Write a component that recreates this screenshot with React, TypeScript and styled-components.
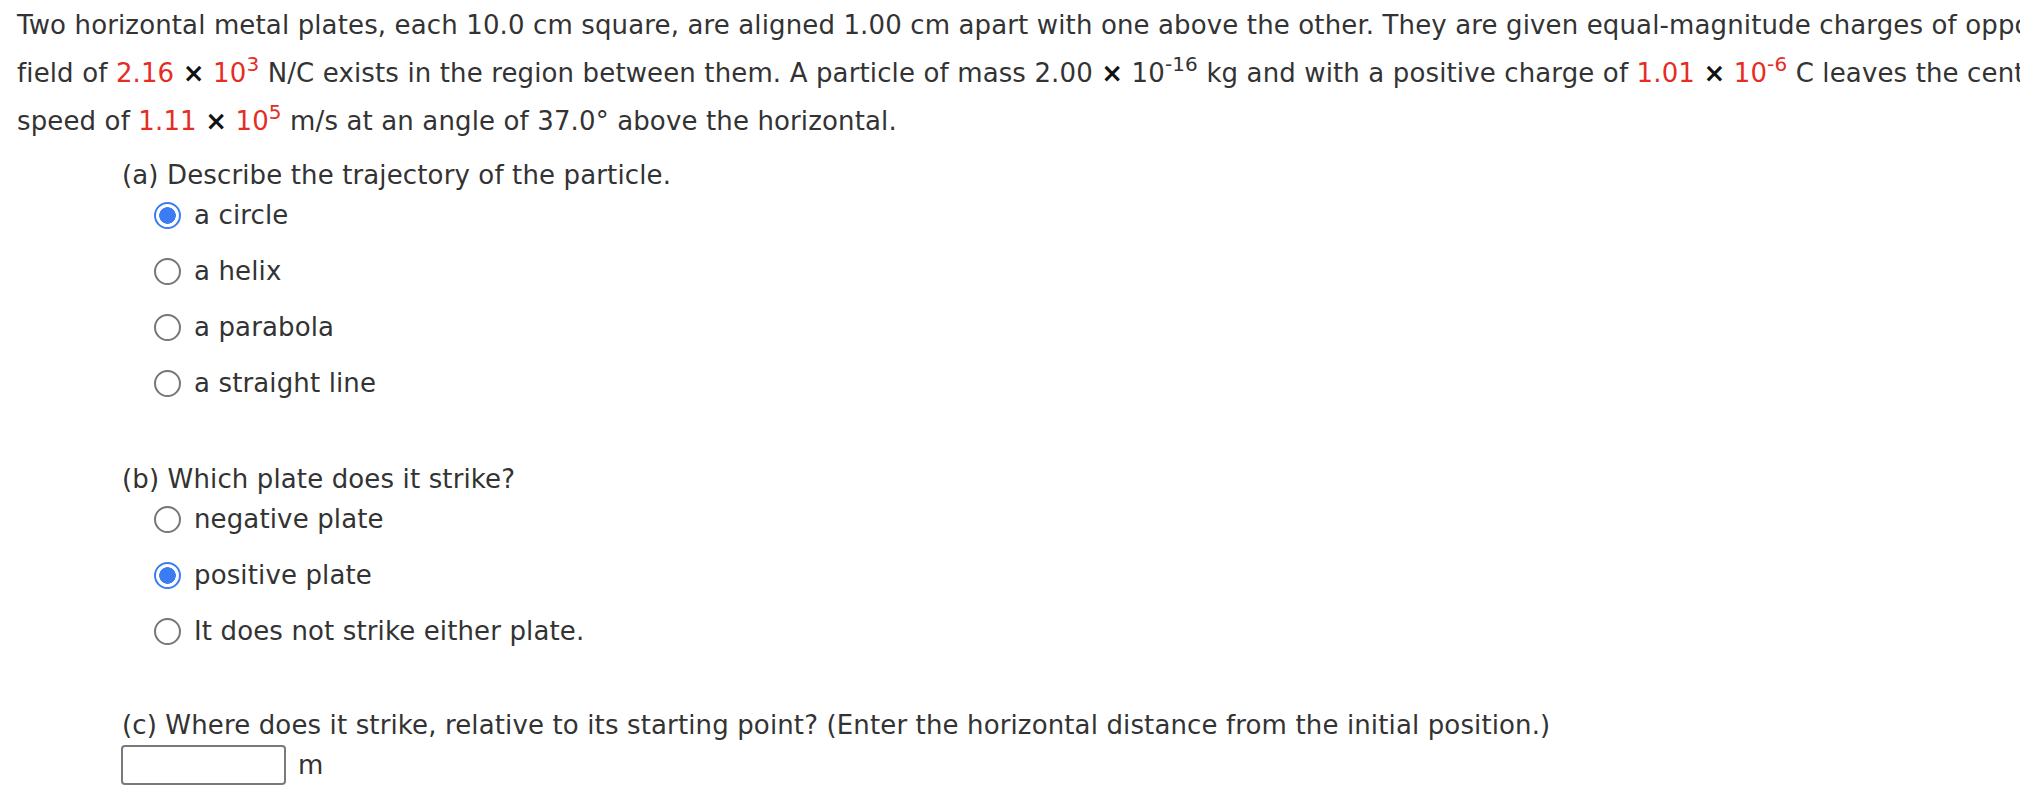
import React from 'react';
import styled, { createGlobalStyle, css } from 'styled-components';

const GlobalStyle = createGlobalStyle`
    html, body {
        margin: 0;
        padding: 0;
        background: #ffffff;
        overflow: hidden;
    }
    body {
        font-family: "DejaVu Sans", Verdana, sans-serif;
        color: #333333;
    }
`;

const Page = styled.div`
    width: 2020px;
    height: 810px;
    padding: 1px 0 0 17px;
    box-sizing: border-box;
    overflow: hidden;
    font-size: 26px;
    letter-spacing: 0.13px;
`;

// the prompt runs past the right edge in the original, so the lines are kept whole and clipped
const Prompt = styled.p`
    margin: 0;
    line-height: 48px;
    white-space: nowrap;
`;

const Value = styled.span`
    color: #e52d24;
`;

const Times = styled.span`
    color: #111111;
    font-weight: bold;
`;

const Sup = styled.sup`
    font-size: 20px;
    line-height: 0;
    vertical-align: baseline;
    position: relative;
    top: -11px;
`;

const Part = styled.div<{ gapTop: number }>`
    margin-top: ${({ gapTop }) => gapTop}px;
    padding-left: 105px;
`;

const PartLabel = styled.div`
    line-height: 40px;
    white-space: nowrap;
`;

const OptionList = styled.div`
    display: flex;
    flex-direction: column;
    gap: 16px;
    padding-left: 32px;
`;

const Option = styled.label`
    display: flex;
    align-items: center;
    height: 40px;
    line-height: 40px;
    white-space: nowrap;
    cursor: pointer;
`;

const Radio = styled.span<{ checked: boolean }>`
    display: inline-block;
    box-sizing: border-box;
    width: 27px;
    height: 27px;
    border-radius: 50%;
    margin-right: 13px;
    border: 2px solid #767676;
    background: #ffffff;
    flex-shrink: 0;

    ${({ checked }) => checked && css`
        border: 2px solid #3b7cf4;
        background: radial-gradient(circle, #3b7cf4 0 8px, #ffffff 8.6px);
    `};
`;

const AnswerRow = styled.div`
    display: flex;
    align-items: center;
    margin-left: -1px;
    height: 40px;
`;

const AnswerInput = styled.input`
    box-sizing: border-box;
    width: 165px;
    height: 40px;
    border: 2px solid #7a7a7a;
    border-radius: 4px;
    background: #ffffff;
    margin: 0 12px 0 0;
    padding: 0 6px;
    font: inherit;
    outline: none;
`;

const Unit = styled.span`
    line-height: 40px;
`;

type Choice = { text: string; checked?: boolean };

const partA: Choice[] = [
    { text: 'a circle', checked: true },
    { text: 'a helix' },
    { text: 'a parabola' },
    { text: 'a straight line' },
];

const partB: Choice[] = [
    { text: 'negative plate' },
    { text: 'positive plate', checked: true },
    { text: 'It does not strike either plate.' },
];

function Choices({ items }: { items: Choice[] }) {
    return (
        <OptionList>
            {items.map((c) => (
                <Option key={c.text}>
                    <Radio checked={!!c.checked} />
                    {c.text}
                </Option>
            ))}
        </OptionList>
    );
}

export default function App() {
    return (
        <>
            <GlobalStyle />
            <Page>
                <Prompt>
                    Two horizontal metal plates, each 10.0 cm square, are aligned 1.00 cm apart with one above the other. They are given equal-magnitude charges of opposite sign so that a uniform downward electric
                    <br />
                    field of <Value>2.16</Value> <Times>×</Times> <Value>10<Sup>3</Sup></Value> N/C exists in the region between them. A particle of mass 2.00 <Times>×</Times> 10<Sup>-16</Sup> kg and with a positive charge of <Value>1.01</Value> <Times>×</Times> <Value>10<Sup>-6</Sup></Value> C leaves the center of the bottom negative plate with an initial
                    <br />
                    speed of <Value>1.11</Value> <Times>×</Times> <Value>10<Sup>5</Sup></Value> m/s at an angle of 37.0° above the horizontal.
                </Prompt>

                <Part gapTop={10}>
                    <PartLabel>(a) Describe the trajectory of the particle.</PartLabel>
                    <Choices items={partA} />
                </Part>

                <Part gapTop={56}>
                    <PartLabel>(b) Which plate does it strike?</PartLabel>
                    <Choices items={partB} />
                </Part>

                <Part gapTop={54}>
                    <PartLabel>(c) Where does it strike, relative to its starting point? (Enter the horizontal distance from the initial position.)</PartLabel>
                    <AnswerRow>
                        <AnswerInput type="text" />
                        <Unit>m</Unit>
                    </AnswerRow>
                </Part>
            </Page>
        </>
    );
}
